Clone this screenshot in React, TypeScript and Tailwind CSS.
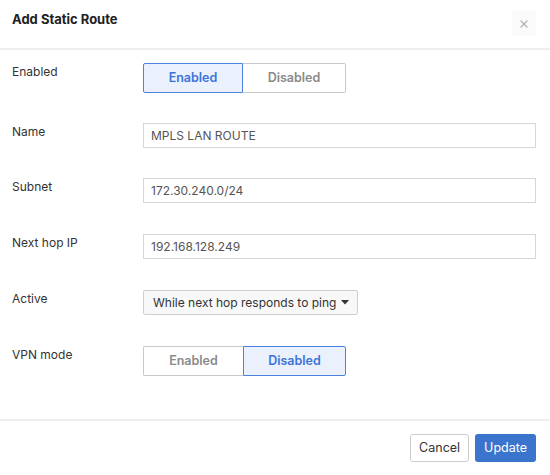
import { X } from "lucide-react";

type ToggleProps = { value: "on" | "off" };

const Toggle = ({ value }: ToggleProps) => {
  const on = value === "on";
  return (
    <div className="flex h-[30px]">
      <button
        className={
          on
            ? "w-[100px] h-full border border-[#4a82e0] bg-[#eaf1fd] text-[#3b74d8] text-[12.5px] font-semibold rounded-l-[2px] z-10"
            : "w-[100px] h-full border border-[#c9c9c9] border-r-0 bg-white text-[#8a8a8a] text-[12.5px] font-semibold rounded-l-[2px]"
        }
      >
        Enabled
      </button>
      <button
        className={
          on
            ? "w-[103px] h-full border border-[#c9c9c9] border-l-0 bg-white text-[#8a8a8a] text-[12.5px] font-semibold rounded-r-[2px]"
            : "w-[103px] h-full border border-[#4a82e0] bg-[#eaf1fd] text-[#3b74d8] text-[12.5px] font-semibold rounded-r-[2px]"
        }
      >
        Disabled
      </button>
    </div>
  );
};

const Row = ({ label, children }: { label: string; children: React.ReactNode }) => (
  <div className="flex">
    <div className="w-[131px] shrink-0 leading-[18px] text-[12px] text-[#333]">{label}</div>
    <div className="flex-1">{children}</div>
  </div>
);

const TextInput = ({ value }: { value: string }) => (
  <div className="h-[25px] border border-[#d6d6d6] px-[7px] flex items-center text-[12px] text-[#555]">
    {value}
  </div>
);

export default function App() {
  return (
    <div className="w-[550px] h-[475px] bg-white flex flex-col font-['Inter',sans-serif]">
      <div className="h-[50px] flex justify-between px-3 pt-[10px] border-b-2 border-[#eeeeee] shrink-0">
        <div className="text-[13px] font-bold text-[#222] leading-[18px]">Add Static Route</div>
        <div className="w-[24px] h-[25px] mt-px mr-[2px] bg-[#fafafa] flex items-center justify-center text-[#b5b5b5]">
          <X size={12} strokeWidth={2.75} />
        </div>
      </div>

      <div className="flex-1 flex flex-col gap-[30px] pt-[13px] pl-3 pr-[14px]">
        <Row label="Enabled">
          <Toggle value="on" />
        </Row>
        <Row label="Name">
          <TextInput value="MPLS LAN ROUTE" />
        </Row>
        <Row label="Subnet">
          <TextInput value="172.30.240.0/24" />
        </Row>
        <div className="mt-px">
          <Row label="Next hop IP">
            <TextInput value="192.168.128.249" />
          </Row>
        </div>
        <div className="mt-px">
          <Row label="Active">
            <div className="w-[215px] h-[25px] border border-[#cfcfcf] bg-[#f8f8f8] rounded-[2px] flex items-center justify-between pl-[9px] pr-[8px] text-[12px] text-[#333]">
              <span>While next hop responds to ping</span>
              <svg width="8" height="5" viewBox="0 0 8 5">
                <path d="M0 0 L8 0 L4 4.5 Z" fill="#333" />
              </svg>
            </div>
          </Row>
        </div>
        <div className="mt-px">
          <Row label="VPN mode">
            <Toggle value="off" />
          </Row>
        </div>
      </div>

      <div className="h-[56px] shrink-0 border-t-2 border-[#eeeeee] flex justify-end items-start gap-[6px] pt-[13px] pr-[14px]">
        <button className="h-[28px] px-[8px] border border-[#cccccc] bg-white rounded-[3px] text-[12.5px] text-[#333]">
          Cancel
        </button>
        <button className="h-[28px] px-[9px] bg-[#3a74cd] rounded-[3px] text-[12.5px] text-white">
          Update
        </button>
      </div>
    </div>
  );
}
